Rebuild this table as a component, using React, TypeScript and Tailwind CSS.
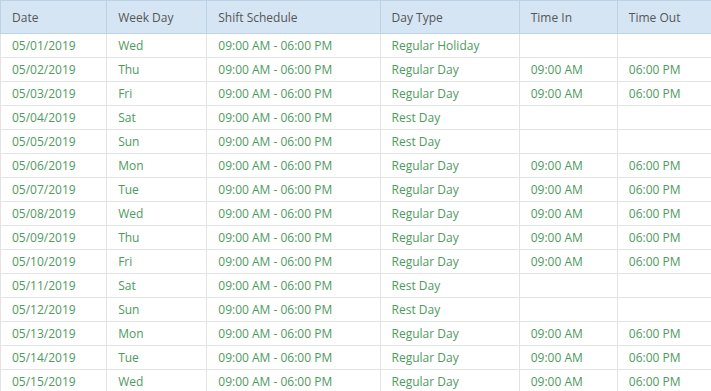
import React from 'react';

type Row = {
    date: string;
    weekDay: string;
    dayType: string;
    timeIn?: string;
    timeOut?: string;
};

const rows: Row[] = [
    { date: '05/01/2019', weekDay: 'Wed', dayType: 'Regular Holiday' },
    { date: '05/02/2019', weekDay: 'Thu', dayType: 'Regular Day', timeIn: '09:00 AM', timeOut: '06:00 PM' },
    { date: '05/03/2019', weekDay: 'Fri', dayType: 'Regular Day', timeIn: '09:00 AM', timeOut: '06:00 PM' },
    { date: '05/04/2019', weekDay: 'Sat', dayType: 'Rest Day' },
    { date: '05/05/2019', weekDay: 'Sun', dayType: 'Rest Day' },
    { date: '05/06/2019', weekDay: 'Mon', dayType: 'Regular Day', timeIn: '09:00 AM', timeOut: '06:00 PM' },
    { date: '05/07/2019', weekDay: 'Tue', dayType: 'Regular Day', timeIn: '09:00 AM', timeOut: '06:00 PM' },
    { date: '05/08/2019', weekDay: 'Wed', dayType: 'Regular Day', timeIn: '09:00 AM', timeOut: '06:00 PM' },
    { date: '05/09/2019', weekDay: 'Thu', dayType: 'Regular Day', timeIn: '09:00 AM', timeOut: '06:00 PM' },
    { date: '05/10/2019', weekDay: 'Fri', dayType: 'Regular Day', timeIn: '09:00 AM', timeOut: '06:00 PM' },
    { date: '05/11/2019', weekDay: 'Sat', dayType: 'Rest Day' },
    { date: '05/12/2019', weekDay: 'Sun', dayType: 'Rest Day' },
    { date: '05/13/2019', weekDay: 'Mon', dayType: 'Regular Day', timeIn: '09:00 AM', timeOut: '06:00 PM' },
    { date: '05/14/2019', weekDay: 'Tue', dayType: 'Regular Day', timeIn: '09:00 AM', timeOut: '06:00 PM' },
    { date: '05/15/2019', weekDay: 'Wed', dayType: 'Regular Day', timeIn: '09:00 AM', timeOut: '06:00 PM' },
];

const headers = ['Date', 'Week Day', 'Shift Schedule', 'Day Type', 'Time In', 'Time Out'];
const widths = ['w-[106px]', 'w-[100px]', 'w-[173px]', 'w-[139px]', 'w-[98px]', 'w-[95px]'];

const App = () => {
    return (
        <div className="w-[711px] h-[391px] overflow-hidden bg-white font-['Open_Sans',sans-serif] text-[12px]">
            <table className="w-[713px] table-fixed border-collapse">
                <colgroup>
                    {widths.map((w, i) => (
                        <col key={i} className={w} />
                    ))}
                </colgroup>
                <thead>
                    <tr className="h-[33px] bg-[#d5e5f3]">
                        {headers.map((h) => (
                            <th
                                key={h}
                                className="border border-[#bcd2e6] text-left font-normal text-[#555] px-[11px] pt-px"
                            >
                                {h}
                            </th>
                        ))}
                    </tr>
                </thead>
                <tbody>
                    {rows.map((r) => (
                        <tr key={r.date} className="h-[24px] text-[#4e9a5e]">
                            <td className="border border-[#e3e3e3] px-[11px] whitespace-nowrap">{r.date}</td>
                            <td className="border border-[#e3e3e3] px-[11px]">{r.weekDay}</td>
                            <td className="border border-[#e3e3e3] px-[11px] whitespace-nowrap">09:00 AM - 06:00 PM</td>
                            <td className="border border-[#e3e3e3] px-[11px] whitespace-nowrap">{r.dayType}</td>
                            <td className="border border-[#e3e3e3] px-[11px] whitespace-nowrap">{r.timeIn}</td>
                            <td className="border border-[#e3e3e3] px-[11px] whitespace-nowrap">{r.timeOut}</td>
                        </tr>
                    ))}
                </tbody>
            </table>
        </div>
    );
};

export default App;
